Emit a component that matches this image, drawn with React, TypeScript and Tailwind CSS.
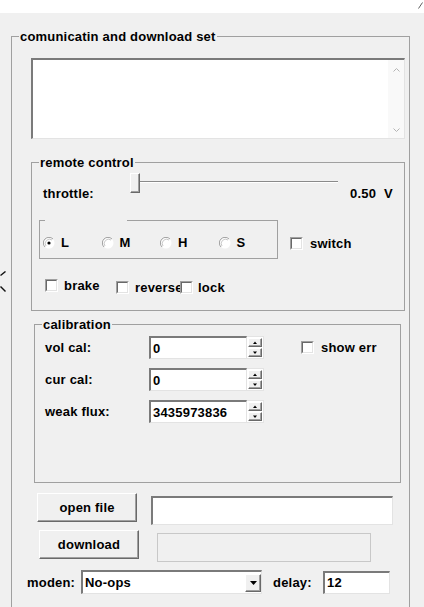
import type { ReactNode } from "react";

const sunken =
  "border-t-2 border-l-2 border-r border-b border-t-[#7a7a7a] border-l-[#7a7a7a] border-r-[#e3e3e3] border-b-[#e3e3e3] bg-white";
const raised =
  "border border-t-white border-l-white border-r-[#696969] border-b-[#696969] shadow-[inset_-1px_-1px_0_#a0a0a0] bg-[#f0f0f0]";

function CheckBox() {
  return (
    <span className="block h-[13px] w-[13px] shrink-0 border border-t-[#a0a0a0] border-l-[#a0a0a0] border-b-white border-r-white">
      <span className="block h-full w-full border border-t-[#696969] border-l-[#696969] border-b-[#e3e3e3] border-r-[#e3e3e3] bg-white" />
    </span>
  );
}

function Check({ label, className = "" }: { label: string; className?: string }) {
  return (
    <div className={`flex items-center whitespace-nowrap ${className}`}>
      <CheckBox />
      <span>{label}</span>
    </div>
  );
}

function Radio({ label, checked = false }: { label: string; checked?: boolean }) {
  return (
    <div className="flex w-[61px] items-center gap-[6px]">
      <svg width="12" height="12" viewBox="0 0 12 12">
        <circle cx="6" cy="6" r="5.5" fill="#fff" />
        <path d="M10 2 A5.5 5.5 0 0 0 2 10" fill="none" stroke="#a0a0a0" />
        <path d="M9 3 A4.3 4.3 0 0 0 3 9" fill="none" stroke="#c8c8c8" />
        {checked && <circle cx="6" cy="6" r="1.6" fill="#000" />}
      </svg>
      <span>{label}</span>
    </div>
  );
}

function Spin({ value }: { value: string }) {
  return (
    <div className="flex h-[23px] w-[115px]">
      <div className={`flex flex-1 items-center pl-[2px] ${sunken}`}>{value}</div>
      <div className="flex w-[17px] flex-col gap-px border-y border-r border-[#e3e3e3] bg-white p-px">
        {["M0 3 L2 0.5 L4 3 Z", "M0 0.5 L2 3 L4 0.5 Z"].map((d) => (
          <div key={d} className={`flex flex-1 items-center justify-center ${raised}`}>
            <svg width="4" height="3" viewBox="0 0 4 3">
              <path d={d} fill="#000" />
            </svg>
          </div>
        ))}
      </div>
    </div>
  );
}

function Row({ label, children }: { label: string; children: ReactNode }) {
  return (
    <div className="flex h-[23px] items-center">
      <span className="ml-[10px] w-[104px]">{label}</span>
      {children}
    </div>
  );
}

export default function App() {
  return (
    <div className="h-[607px] w-[424px] overflow-hidden bg-[#f0f0f0] font-['Liberation_Sans',Arial,sans-serif] text-[13px] leading-[15px] font-bold tracking-[0.2px] text-black">
      <div className="flex h-[13px] justify-end bg-white pt-[2px] pr-[1px]">
        <svg width="5" height="7" viewBox="0 0 5 7">
          <path d="M4.5 0.5 L0.5 6.5" stroke="#606060" />
        </svg>
      </div>

      <div className="flex">
        <div className="w-[11px] shrink-0 pt-[258px]">
          <svg width="6" height="22" viewBox="0 0 6 22">
            <path d="M5.5 0.5 L0.5 4.5" stroke="#111" strokeWidth="1.4" />
            <path d="M0.5 15.5 L5.5 20.5" stroke="#111" strokeWidth="1.4" />
          </svg>
        </div>

        <fieldset className="mt-[16px] w-[399px] border border-b-0 border-[#a0a0a0] pb-[30px]">
          <legend className="ml-[7px] px-[1px]">comunicatin and download set</legend>

          {/* log output */}
          <div className={`mt-[14px] ml-[19px] flex h-[81px] w-[374px] ${sunken}`}>
            <div className="flex-1" />
            <div className="flex w-[16px] flex-col items-center justify-between bg-[#f9f9f9] pt-[8px] pb-[6px]">
              <svg width="7" height="4" viewBox="0 0 7 4">
                <polyline points="0.5,3.5 3.5,0.5 6.5,3.5" fill="none" stroke="#b4b4b4" />
              </svg>
              <svg width="7" height="4" viewBox="0 0 7 4">
                <polyline points="0.5,0.5 3.5,3.5 6.5,0.5" fill="none" stroke="#b4b4b4" />
              </svg>
            </div>
          </div>

          <fieldset className="mt-[16px] ml-[19px] w-[374px] border border-[#a0a0a0] pb-[16px]">
            <legend className="ml-[7px] px-[1px]">remote control</legend>

            <div className="flex h-[30px] items-start">
              <span className="mt-[16px] ml-[11px] w-[87px]">throttle:</span>
              <div className="mt-[3px] flex h-[20px] w-[208px] items-start">
                <div className="h-[20px] w-[10px] border border-t-white border-l-white border-r-[#696969] border-b-[#696969] bg-[#f0f0f0] shadow-[inset_-1px_-1px_0_#a0a0a0]" />
                <div className="mt-[8px] h-[2px] flex-1 border-t border-b border-t-[#8a8a8a] border-b-white" />
              </div>
              <span className="mt-[16px] ml-[12px]">0.50</span>
              <span className="mt-[16px] ml-[8px]">V</span>
            </div>

            <div className="mt-[20px] flex items-start">
              <div className="ml-[7px] h-[39px] w-[239px] border-x border-b border-[#a0a0a0]">
                <div className="flex h-px">
                  <div className="w-[5px] bg-[#a0a0a0]" />
                  <div className="w-[82px]" />
                  <div className="flex-1 bg-[#a0a0a0]" />
                </div>
                <div className="mt-[14px] flex pl-[3px]">
                  <Radio label="L" checked />
                  <Radio label="M" />
                  <Radio label="H" />
                  <Radio label="S" />
                </div>
              </div>
              <Check label="switch" className="mt-[16px] ml-[12px] gap-[7px]" />
            </div>

            <div className="mt-[19px] flex h-[16px] items-start">
              <Check label="brake" className="ml-[13px] w-[71px] gap-[6px]" />
              <Check label="reverse" className="mt-[2px] w-[64px] gap-[6px] overflow-hidden" />
              <Check label="lock" className="mt-[2px] gap-[5px]" />
            </div>
          </fieldset>

          <fieldset className="mt-[6px] ml-[22px] w-[367px] border border-[#a0a0a0] pb-[59px]">
            <legend className="ml-[7px] px-[1px]">calibration</legend>
            <div className="mt-[4px] flex flex-col gap-[9px]">
              <Row label="vol cal:">
                <Spin value="0" />
                <Check label="show err" className="ml-[37px] gap-[7px]" />
              </Row>
              <Row label="cur cal:">
                <Spin value="0" />
              </Row>
              <Row label="weak flux:">
                <Spin value="3435973836" />
              </Row>
            </div>
          </fieldset>

          <div className="mt-[10px] ml-[25px] flex items-start">
            <button className={`h-[29px] w-[100px] ${raised}`}>open file</button>
            <div className={`mt-[3px] ml-[14px] h-[29px] w-[242px] ${sunken}`} />
          </div>

          <div className="mt-[5px] ml-[27px] flex items-start">
            <button className={`h-[29px] w-[100px] ${raised}`}>download</button>
            <div className="mt-[3px] ml-[18px] h-[29px] w-[214px] border border-[#c8c8c8] bg-[#f0f0f0]" />
          </div>

          <div className="mt-[8px] ml-[15px] flex h-[24px] items-center">
            <span className="w-[54px]">moden:</span>
            <div className={`flex h-[24px] w-[181px] items-center ${sunken}`}>
              <span className="flex-1 pl-[2px]">No-ops</span>
              <div className={`flex h-[18px] w-[16px] items-center justify-center ${raised}`}>
                <svg width="7" height="4" viewBox="0 0 7 4">
                  <path d="M0 0 L7 0 L3.5 4 Z" fill="#000" />
                </svg>
              </div>
            </div>
            <span className="ml-[11px] w-[50px]">delay:</span>
            <div className={`flex h-[23px] w-[67px] items-center pl-[2px] ${sunken}`}>12</div>
          </div>
        </fieldset>
      </div>
    </div>
  );
}
